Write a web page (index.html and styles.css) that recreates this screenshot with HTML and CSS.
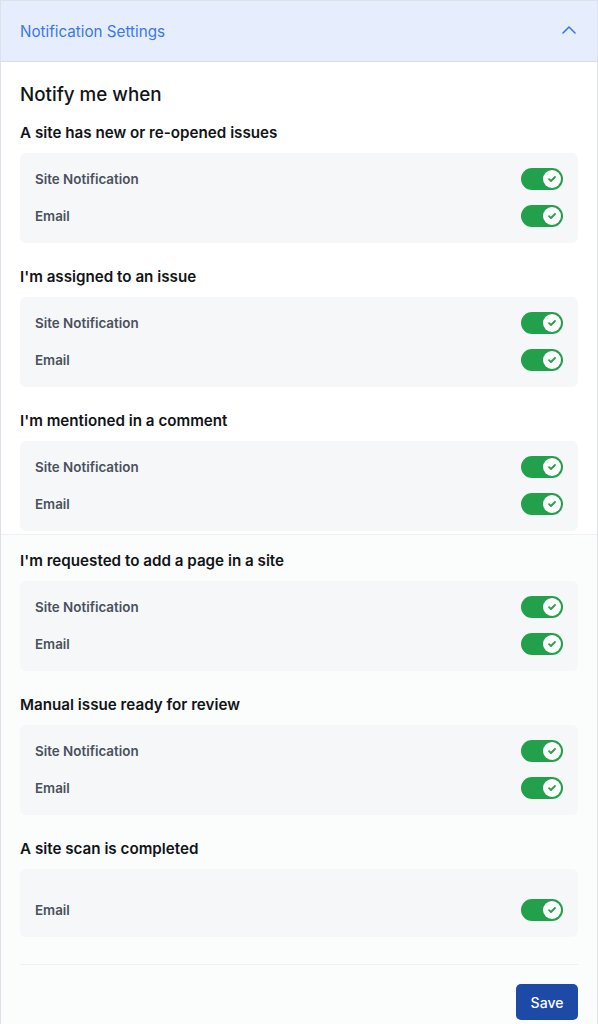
FILE: index.html
```html
<!DOCTYPE html>
<html>
<head>
<meta charset="utf-8">
<link rel="stylesheet" href="styles.css">
</head>
<body>
<div class="panel">
  <div class="panel-header">
    <span class="panel-title">Notification Settings</span>
    <svg class="chevron" width="14" height="9" viewBox="0 0 14 9"><path d="M1 8 L7 2 L13 8" fill="none" stroke="#3b76ef" stroke-width="1.6" stroke-linecap="round" stroke-linejoin="round"/></svg>
  </div>
  <div class="panel-body">
    <div class="group group-top">
      <h2 class="intro">Notify me when</h2>
      <section class="section">
        <h3 class="section-title">A site has new or re-opened issues</h3>
        <div class="card">
          <div class="row"><span class="label">Site Notification</span><span class="toggle"><span class="knob"><svg width="10" height="8" viewBox="0 0 10 8"><path d="M2 4.2 L4 6 L8 2" fill="none" stroke="#22a04b" stroke-width="1.8" stroke-linecap="round" stroke-linejoin="round"/></svg></span></span></div>
          <div class="row"><span class="label">Email</span><span class="toggle"><span class="knob"><svg width="10" height="8" viewBox="0 0 10 8"><path d="M2 4.2 L4 6 L8 2" fill="none" stroke="#22a04b" stroke-width="1.8" stroke-linecap="round" stroke-linejoin="round"/></svg></span></span></div>
        </div>
      </section>
      <section class="section">
        <h3 class="section-title">I'm assigned to an issue</h3>
        <div class="card">
          <div class="row"><span class="label">Site Notification</span><span class="toggle"><span class="knob"><svg width="10" height="8" viewBox="0 0 10 8"><path d="M2 4.2 L4 6 L8 2" fill="none" stroke="#22a04b" stroke-width="1.8" stroke-linecap="round" stroke-linejoin="round"/></svg></span></span></div>
          <div class="row"><span class="label">Email</span><span class="toggle"><span class="knob"><svg width="10" height="8" viewBox="0 0 10 8"><path d="M2 4.2 L4 6 L8 2" fill="none" stroke="#22a04b" stroke-width="1.8" stroke-linecap="round" stroke-linejoin="round"/></svg></span></span></div>
        </div>
      </section>
      <section class="section last-top">
        <h3 class="section-title">I'm mentioned in a comment</h3>
        <div class="card">
          <div class="row"><span class="label">Site Notification</span><span class="toggle"><span class="knob"><svg width="10" height="8" viewBox="0 0 10 8"><path d="M2 4.2 L4 6 L8 2" fill="none" stroke="#22a04b" stroke-width="1.8" stroke-linecap="round" stroke-linejoin="round"/></svg></span></span></div>
          <div class="row"><span class="label">Email</span><span class="toggle"><span class="knob"><svg width="10" height="8" viewBox="0 0 10 8"><path d="M2 4.2 L4 6 L8 2" fill="none" stroke="#22a04b" stroke-width="1.8" stroke-linecap="round" stroke-linejoin="round"/></svg></span></span></div>
        </div>
      </section>
    </div>
    <div class="group group-bottom">
      <section class="section">
        <h3 class="section-title">I'm requested to add a page in a site</h3>
        <div class="card">
          <div class="row"><span class="label">Site Notification</span><span class="toggle"><span class="knob"><svg width="10" height="8" viewBox="0 0 10 8"><path d="M2 4.2 L4 6 L8 2" fill="none" stroke="#22a04b" stroke-width="1.8" stroke-linecap="round" stroke-linejoin="round"/></svg></span></span></div>
          <div class="row"><span class="label">Email</span><span class="toggle"><span class="knob"><svg width="10" height="8" viewBox="0 0 10 8"><path d="M2 4.2 L4 6 L8 2" fill="none" stroke="#22a04b" stroke-width="1.8" stroke-linecap="round" stroke-linejoin="round"/></svg></span></span></div>
        </div>
      </section>
      <section class="section">
        <h3 class="section-title">Manual issue ready for review</h3>
        <div class="card">
          <div class="row"><span class="label">Site Notification</span><span class="toggle"><span class="knob"><svg width="10" height="8" viewBox="0 0 10 8"><path d="M2 4.2 L4 6 L8 2" fill="none" stroke="#22a04b" stroke-width="1.8" stroke-linecap="round" stroke-linejoin="round"/></svg></span></span></div>
          <div class="row"><span class="label">Email</span><span class="toggle"><span class="knob"><svg width="10" height="8" viewBox="0 0 10 8"><path d="M2 4.2 L4 6 L8 2" fill="none" stroke="#22a04b" stroke-width="1.8" stroke-linecap="round" stroke-linejoin="round"/></svg></span></span></div>
        </div>
      </section>
      <section class="section">
        <h3 class="section-title">A site scan is completed</h3>
        <div class="card">
          <div class="row-empty"></div>
          <div class="row"><span class="label">Email</span><span class="toggle"><span class="knob"><svg width="10" height="8" viewBox="0 0 10 8"><path d="M2 4.2 L4 6 L8 2" fill="none" stroke="#22a04b" stroke-width="1.8" stroke-linecap="round" stroke-linejoin="round"/></svg></span></span></div>
        </div>
      </section>
      <div class="footer">
        <button class="save">Save</button>
      </div>
    </div>
  </div>
</div>
</body>
</html>
```

FILE: styles.css
```css
* { box-sizing: border-box; }
html, body { margin: 0; padding: 0; }
body {
  font-family: Inter, "Noto Sans", "Liberation Sans", sans-serif;
  color: #111418;
  background: #ffffff;
}
.panel {
  width: 598px;
  min-height: 1024px;
  border: 1px solid #dde2ea;
  border-bottom: none;
  background: #fbfcfc;
}
.panel-header {
  height: 61px;
  background: #e6eefd;
  border-bottom: 1px solid #d6dee9;
  display: flex;
  align-items: center;
  justify-content: space-between;
  padding: 0 21px 0 19px;
}
.panel-title {
  font-size: 15.2px;
  color: #3b76ef;
  font-weight: 400;
}
.chevron { display: block; margin-top: -4px; }
.group { padding: 0 19px 0 19px; }
.group-top {
  background: #ffffff;
  padding-top: 19px;
  padding-bottom: 3px;
  border-bottom: 1px solid #eff1f3;
}
.group-bottom {
  padding-top: 14px;
}
.intro {
  margin: 0 0 12px 0;
  font-size: 18.8px;
  line-height: 28px;
  font-weight: 500;
}
.section { margin-bottom: 22px; }
.section.last-top { margin-bottom: 0; }
.section-title {
  margin: 0 0 8px 0;
  font-size: 15.2px;
  line-height: 24px;
  font-weight: 600;
}
.card {
  background: #f5f7f9;
  border-radius: 6px;
  padding: 15px 15px 16px 15px;
  display: flex;
  flex-direction: column;
  gap: 15px;
}
.row-empty { height: 0; }
.row {
  display: flex;
  align-items: center;
  justify-content: space-between;
  height: 22px;
}
.label {
  font-size: 13.4px;
  font-weight: 600;
  color: #4a515c;
}
.toggle {
  width: 42px;
  height: 22px;
  border-radius: 11px;
  background: #22a04b;
  display: flex;
  align-items: center;
  justify-content: flex-end;
  padding-right: 2px;
}
.knob {
  width: 18px;
  height: 18px;
  border-radius: 50%;
  background: #ffffff;
  display: flex;
  align-items: center;
  justify-content: center;
}
.knob svg { display: block; }
.footer {
  margin-top: 27px;
  border-top: 1px solid #eef0f2;
  padding-top: 19px;
  display: flex;
  justify-content: flex-end;
}
.save {
  width: 62px;
  height: 36px;
  border: none;
  border-radius: 5px;
  background: #1d49a7;
  color: #ffffff;
  font-family: Inter, "Noto Sans", "Liberation Sans", sans-serif;
  font-size: 14px;
  font-weight: 500;
}
```
